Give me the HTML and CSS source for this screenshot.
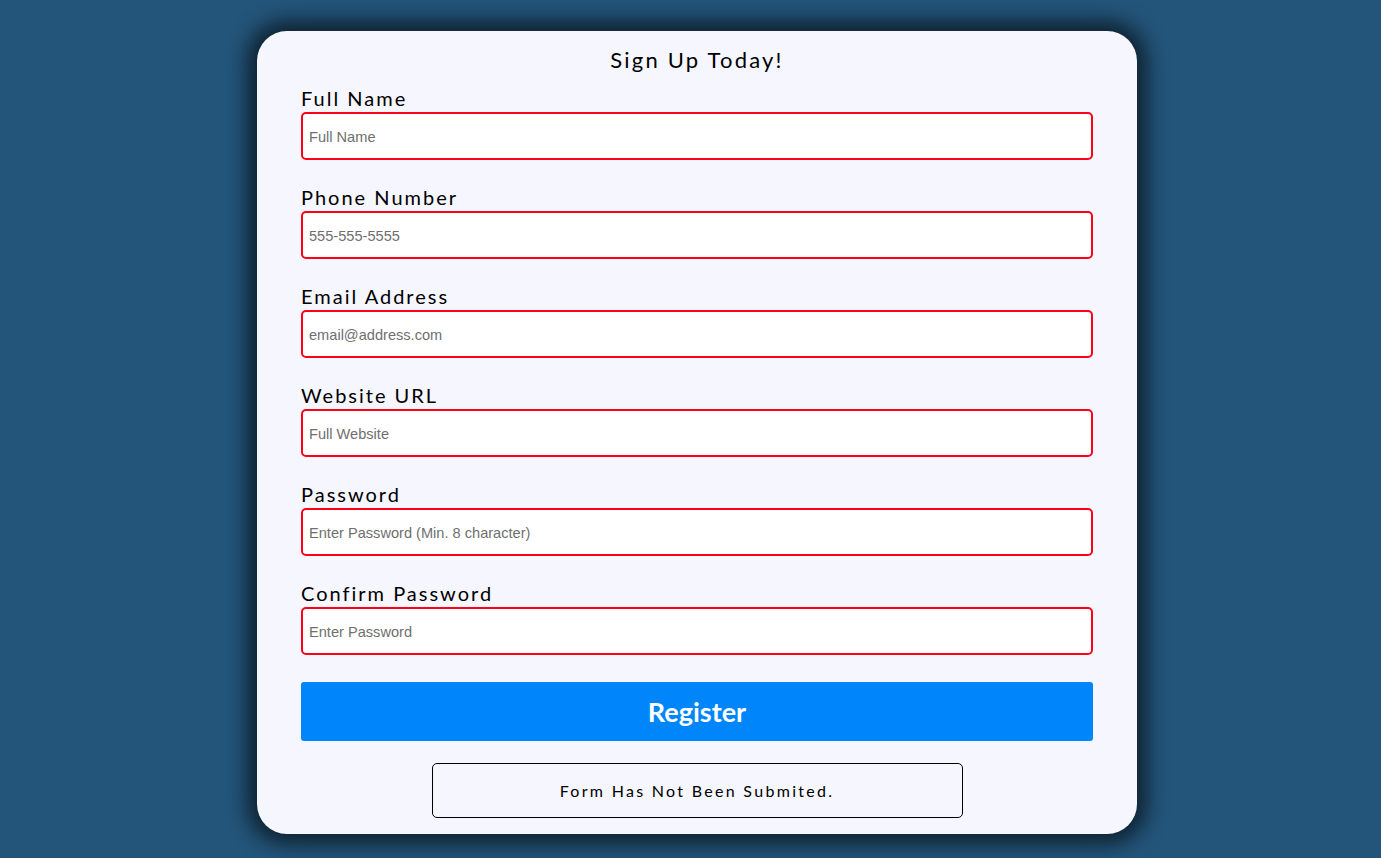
FILE: index.html
```html
<!DOCTYPE html>
<html lang="en">
<head>
  <meta charset="UTF-8">
  <meta name="viewport" content="width=device-width, initial-scale=1.0">
  <title>Sign Up Today!</title>
  <link rel="stylesheet" href="styles.css">
</head>
<body>

<div class="container">
  <form id="form" class="signup-form">
    <h1>Sign Up Today!</h1>

    <div class="form-group">
      <label for="name">Full Name</label>
      <input type="text" id="name" placeholder="Full Name">
    </div>
    <div class="form-group">
      <label for="phone">Phone Number</label>
      <input type="tel" id="phone" placeholder="555-555-5555">
    </div>
    <div class="form-group">
      <label for="email">Email Address</label>
      <input type="email" id="email" placeholder="email@address.com">
    </div>
    <div class="form-group">
      <label for="website">Website URL</label>
      <input type="url" id="website" placeholder="Full Website">
    </div>
    <div class="form-group">
      <label for="password1">Password</label>
      <input type="password" id="password1" placeholder="Enter Password (Min. 8 character)">
    </div>
    <div class="form-group">
      <label for="password2">Confirm Password</label>
      <input type="password" id="password2" placeholder="Enter Password">
    </div>

    <button type="submit">Register</button>

    <div class="message-container">
      <h3 id="message">Form Has Not Been Submited.</h3>
    </div>
  </form>
</div>

</body>
</html>
```

FILE: styles.css
```css
html {
  box-sizing: border-box;
}
*, *::before, *::after {
  box-sizing: inherit;
}
body {
  margin: 0;
  min-height: 100vh;
  background-color: #235479;
  font-family: Lato, sans-serif;
  letter-spacing: 2px;
  display: flex;
  justify-content: center;
  padding: 31px 0 0 13px;
}
.container {
  width: 880px;
  height: 803px;
  background-color: #f5f6fe;
  border-radius: 30px;
  box-shadow: 0 0 20px 10px rgba(0, 0, 0, 0.6);
  padding: 15px 44px 0;
}
h1 {
  margin: 0 0 12px;
  text-align: center;
  font-size: 22px;
  font-weight: 400;
  letter-spacing: 2.2px;
  line-height: 28px;
  color: #000;
}
.form-group {
  display: flex;
  flex-direction: column;
  margin-bottom: 25px;
}
label {
  font-size: 20px;
  line-height: 24px;
  margin-bottom: 2px;
  color: #000;
}
input {
  width: 100%;
  height: 48px;
  padding: 1px 6px 0;
  border: 2px solid #ff0019;
  border-radius: 5px;
  background: #fff;
  font-family: "Liberation Sans", Arial, sans-serif;
  font-size: 14.6px;
  letter-spacing: 0;
  outline: none;
}
input::placeholder {
  color: #6f6f6f;
}
button {
  display: block;
  width: 100%;
  height: 59px;
  margin-top: 27px;
  border: none;
  border-radius: 3px;
  background-color: #0086fa;
  color: #fff;
  font-family: Lato, sans-serif;
  font-size: 27px;
  font-weight: 700;
  letter-spacing: 0;
  cursor: pointer;
}
.message-container {
  width: 531px;
  height: 55px;
  margin: 22px auto 0;
  border: 1px solid #000;
  border-radius: 5px;
  display: flex;
  align-items: center;
  justify-content: center;
}
#message {
  margin: 0;
  font-size: 16px;
  font-weight: 400;
  letter-spacing: 2.3px;
  color: #000;
}
```
